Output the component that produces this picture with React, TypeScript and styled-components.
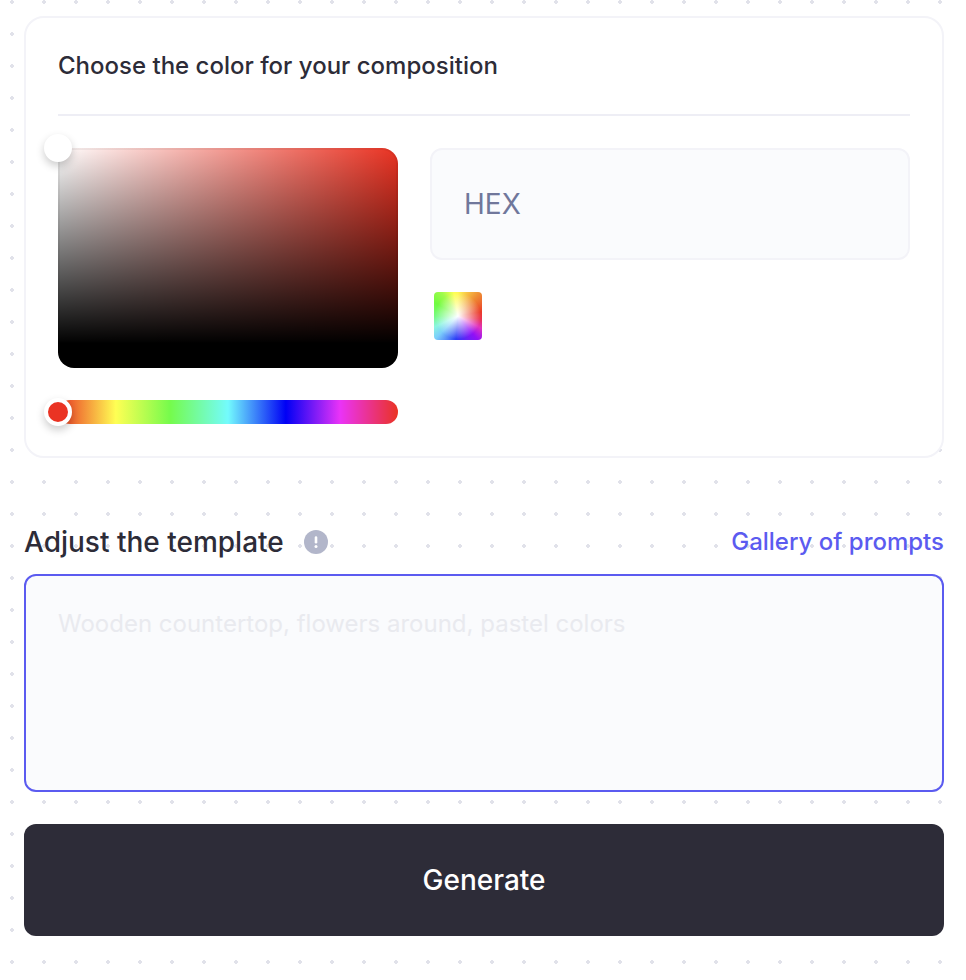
import React, { useRef, useState } from "react";
import styled, { createGlobalStyle } from "styled-components";

const color = {
  ink: "#2d2c38",
  accent: "#5b5bf0",
  muted: "#70779b",
  field: "#fafbfd",
  line: "#f3f3f8",
  rule: "#eeeef5",
  dot: "#e1e2ea",
  icon: "#b2b6ca",
  placeholder: "#e9eaef",
};

const GlobalStyle = createGlobalStyle`
  *, *::before, *::after { box-sizing: border-box; }
  body {
    margin: 0;
    background: #fff;
    color: ${color.ink};
    font-family: Inter, "Liberation Sans", sans-serif;
    font-size: 24px;
    line-height: 32px;
  }
  button, input, textarea { font: inherit; }
`;

const Page = styled.main`
  display: flex;
  flex-direction: column;
  min-height: 100vh;
  padding: 16px 22px 44px 24px;
  background-image: radial-gradient(circle, ${color.dot} 2px, transparent 2px);
  background-size: 32px 32px;
  background-position: -4px -14px;
`;

const Card = styled.section`
  padding: 32px;
  border: 2px solid ${color.line};
  border-radius: 20px;
  background: #fff;
`;

const CardTitle = styled.h2`
  margin: 0;
  padding-bottom: 32px;
  border-bottom: 2px solid ${color.rule};
  font-size: 24px;
  font-weight: 500;
  line-height: 32px;
`;

const PickerLayout = styled.div`
  display: flex;
  align-items: flex-start;
  gap: 32px;
  margin-top: 32px;
`;

const Picker = styled.div`
  display: flex;
  flex-direction: column;
  flex: 0 0 340px;
  gap: 32px;
`;

const Saturation = styled.div<{ $hue: string }>`
  position: relative;
  height: 220px;
  border-bottom: 24px solid #000;
  border-radius: 0 16px 16px 16px;
  background-color: ${(p) => p.$hue};
  background-image: linear-gradient(to top, #000, transparent),
    linear-gradient(to right, #fff, rgba(255, 255, 255, 0));
  box-shadow: inset 0 0 0 2px rgba(0, 0, 0, 0.05);
  cursor: crosshair;
  touch-action: none;
`;

const SaturationKnob = styled.span`
  position: absolute;
  width: 28px;
  height: 28px;
  border: 4px solid #fff;
  border-radius: 50%;
  transform: translate(-50%, -50%);
  box-shadow: 0 4px 8px rgba(0, 0, 0, 0.2);
`;

const HueTrack = styled.div`
  display: flex;
  height: 24px;
  border-radius: 12px;
  background: linear-gradient(
    to right,
    #ea3323 0%,
    #ffff54 17%,
    #75fb4c 33%,
    #73fbfd 50%,
    #0000f5 67%,
    #ea33f7 83%,
    #ea3323 100%
  );
`;

const HueInput = styled.input<{ $hue: string }>`
  flex: 1;
  height: 24px;
  margin: 0 -14px;
  appearance: none;
  background: transparent;
  cursor: pointer;

  &::-webkit-slider-thumb {
    appearance: none;
    width: 28px;
    height: 28px;
    border: 4px solid #fff;
    border-radius: 50%;
    background: ${(p) => p.$hue};
    box-shadow: 0 4px 8px rgba(0, 0, 0, 0.2);
  }
`;

const Values = styled.div`
  display: flex;
  flex: 1;
  min-width: 0;
  flex-direction: column;
  align-items: flex-start;
  gap: 32px;
`;

const HexInput = styled.input`
  width: 100%;
  height: 112px;
  padding: 0 32px;
  border: 2px solid ${color.line};
  border-radius: 12px;
  outline: none;
  background: ${color.field};
  color: ${color.ink};
  font-size: 28px;

  &::placeholder {
    color: ${color.muted};
    opacity: 1;
  }
`;

const Swatch = styled.button`
  width: 48px;
  height: 48px;
  margin-left: 4px;
  padding: 0;
  border: 0;
  border-radius: 4px;
  background: radial-gradient(circle, #fff 0%, rgba(255, 255, 255, 0) 68%),
    conic-gradient(
      #fff854 0deg,
      #ee8a33 45deg,
      #ea3a28 80deg,
      #ea3350 98deg,
      #e033c0 118deg,
      #9010f7 140deg,
      #2a3cf5 185deg,
      #7ccffb 225deg,
      #8cf5e0 245deg,
      #75fb80 270deg,
      #70fb40 300deg,
      #a0fb4c 325deg,
      #fdff54 350deg,
      #fff854 360deg
    );
  cursor: pointer;
`;

const PromptHeader = styled.header`
  display: flex;
  align-items: center;
  gap: 20px;
  margin: 64px 0 12px;
`;

const PromptLabel = styled.label`
  font-size: 28px;
  font-weight: 500;
  line-height: 40px;
`;

const HintButton = styled.button`
  display: flex;
  padding: 0;
  border: 0;
  border-radius: 50%;
  background: none;
  cursor: pointer;
`;

const GalleryLink = styled.a`
  margin-left: auto;
  color: ${color.accent};
  font-weight: 500;
  text-decoration: none;
`;

const Prompt = styled.textarea`
  display: block;
  width: 100%;
  height: 218px;
  padding: 32px;
  border: 2px solid ${color.accent};
  border-radius: 12px;
  outline: none;
  resize: none;
  background: ${color.field};
  color: ${color.ink};

  &::placeholder {
    color: ${color.placeholder};
    opacity: 1;
  }
`;

const GenerateButton = styled.button`
  height: 112px;
  margin-top: 32px;
  border: 0;
  border-radius: 12px;
  background: ${color.ink};
  color: #fff;
  font-size: 28px;
  font-weight: 500;
  cursor: pointer;
`;

const hueStops = [
  [234, 51, 35],
  [255, 255, 84],
  [117, 251, 76],
  [115, 251, 253],
  [0, 0, 245],
  [234, 51, 247],
  [234, 51, 35],
];

function hueColor(hue: number) {
  const index = Math.min(5, Math.floor(hue / 60));
  const t = (hue - index * 60) / 60;
  const mixed = hueStops[index].map((c, i) =>
    Math.round(c + (hueStops[index + 1][i] - c) * t)
  );
  return `rgb(${mixed.join(", ")})`;
}

function HintIcon() {
  return (
    <svg width="24" height="24" viewBox="0 0 24 24" aria-hidden="true">
      <circle cx="12" cy="12" r="12" fill={color.icon} />
      <path
        d="M12 7.5v4.8"
        stroke="#fff"
        strokeWidth="2.6"
        strokeLinecap="round"
      />
      <circle cx="12" cy="16.5" r="1.5" fill="#fff" />
    </svg>
  );
}

export default function App() {
  const [hue, setHue] = useState(0);
  const [point, setPoint] = useState({ x: 0, y: 0 });
  const area = useRef<HTMLDivElement>(null);

  const pick = (e: React.PointerEvent) => {
    if (e.buttons !== 1 || !area.current) return;
    const r = area.current.getBoundingClientRect();
    const clamp = (n: number) => Math.max(0, Math.min(1, n));
    setPoint({
      x: clamp((e.clientX - r.left) / r.width),
      y: clamp((e.clientY - r.top) / r.height),
    });
  };

  return (
    <>
      <GlobalStyle />
      <Page>
        <Card>
          <CardTitle>Choose the color for your composition</CardTitle>
          <PickerLayout>
            <Picker>
              <Saturation
                ref={area}
                $hue={hueColor(hue)}
                role="slider"
                tabIndex={0}
                aria-label="Saturation and brightness"
                aria-valuenow={Math.round(point.x * 100)}
                onPointerDown={pick}
                onPointerMove={pick}
              >
                <SaturationKnob
                  style={{
                    left: `${point.x * 100}%`,
                    top: `${point.y * 100}%`,
                    backgroundColor: `color-mix(in srgb, #000 ${point.y * 100}%, color-mix(in srgb, #fff, ${hueColor(hue)} ${point.x * 100}%))`,
                  }}
                />
              </Saturation>
              <HueTrack>
                <HueInput
                  type="range"
                  min={0}
                  max={360}
                  value={hue}
                  $hue={hueColor(hue)}
                  aria-label="Hue"
                  onChange={(e) => setHue(Number(e.target.value))}
                />
              </HueTrack>
            </Picker>
            <Values>
              <HexInput type="text" placeholder="HEX" aria-label="HEX" />
              <Swatch type="button" aria-label="Open palette" />
            </Values>
          </PickerLayout>
        </Card>

        <PromptHeader>
          <PromptLabel htmlFor="prompt">Adjust the template</PromptLabel>
          <HintButton type="button" aria-label="About the template">
            <HintIcon />
          </HintButton>
          <GalleryLink href="#gallery">Gallery of prompts</GalleryLink>
        </PromptHeader>
        <Prompt
          id="prompt"
          placeholder="Wooden countertop, flowers around, pastel colors"
        />
        <GenerateButton type="button">Generate</GenerateButton>
      </Page>
    </>
  );
}
